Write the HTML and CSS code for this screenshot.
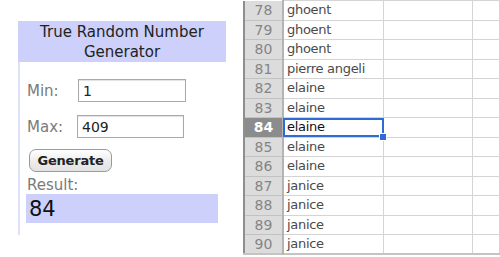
FILE: index.html
```html
<!DOCTYPE html>
<html lang="en">
<head>
    <meta charset="UTF-8">
    <meta name="viewport" content="width=device-width, initial-scale=1.0">
    <title>True Random Number Generator</title>
    <link rel="stylesheet" href="styles.css">
</head>
<body>
    <div class="rng-panel">
        <div class="rng-header">True Random Number Generator</div>
        <div class="rng-body">
            <div class="field-row">
                <label for="min">Min:</label>
                <input type="text" id="min" value="1">
            </div>
            <div class="field-row">
                <label for="max">Max:</label>
                <input type="text" id="max" value="409">
            </div>
            <button type="button">Generate</button>
            <div class="result-label">Result:</div>
            <div class="result-value">84</div>
        </div>
    </div>

    <div class="sheet">
        <table>
            <tr><th>78</th><td>ghoent</td><td></td><td></td></tr>
            <tr><th>79</th><td>ghoent</td><td></td><td></td></tr>
            <tr><th>80</th><td>ghoent</td><td></td><td></td></tr>
            <tr><th>81</th><td>pierre angeli</td><td></td><td></td></tr>
            <tr><th>82</th><td>elaine</td><td></td><td></td></tr>
            <tr><th>83</th><td>elaine</td><td></td><td></td></tr>
            <tr class="active"><th>84</th><td class="selected">elaine<span class="handle"></span></td><td></td><td></td></tr>
            <tr><th>85</th><td>elaine</td><td></td><td></td></tr>
            <tr><th>86</th><td>elaine</td><td></td><td></td></tr>
            <tr><th>87</th><td>janice</td><td></td><td></td></tr>
            <tr><th>88</th><td>janice</td><td></td><td></td></tr>
            <tr><th>89</th><td>janice</td><td></td><td></td></tr>
            <tr><th>90</th><td>janice</td><td></td><td></td></tr>
        </table>
    </div>
</body>
</html>
```

FILE: styles.css
```css
:root {
    --lavender: #ccd0fa;
    --label-gray: #7a7a7a;
    --grid-line: #d4d4d4;
    --select-blue: #2f6ad6;
}

body {
    margin: 0;
    padding: 0;
    background: white;
    font-family: "DejaVu Sans", Verdana, sans-serif;
    display: flex;
    align-items: flex-start;
    width: 500px;
    height: 257px;
    overflow: hidden;
}

.rng-panel {
    width: 208px;
    margin: 21px 0 0 18px;
}

.rng-header {
    background: var(--lavender);
    color: #222;
    font-size: 15px;
    line-height: 20px;
    text-align: center;
    padding: 1px 8px 0;
    height: 40px;
}

.rng-body {
    border-left: 2px solid #dfe1fb;
    padding: 17px 0 12px 7px;
    height: 144px;
}

.field-row {
    display: flex;
    align-items: center;
    height: 23px;
    margin-bottom: 13px;
}

.field-row label {
    width: 51px;
    color: var(--label-gray);
    font-size: 15px;
}

.field-row input {
    width: 108px;
    height: 23px;
    box-sizing: border-box;
    border: 1px solid #a9a9a9;
    box-shadow: inset 0 1px 1px rgba(0,0,0,0.12);
    font-family: "DejaVu Sans", Verdana, sans-serif;
    font-size: 14px;
    color: #222;
    padding: 1px 4px 0;
    outline: none;
}

.field-row:nth-child(2) input {
    margin-left: -1px;
    width: 107px;
}

button {
    display: block;
    margin: -2px 0 0 2px;
    width: 83px;
    height: 23px;
    border: 1px solid #9a9a9a;
    border-radius: 7px;
    background: linear-gradient(#ffffff, #ececec 55%, #e2e2e2);
    font-family: "DejaVu Sans", Verdana, sans-serif;
    font-size: 13px;
    font-weight: bold;
    color: #222;
    padding: 0;
    letter-spacing: -0.2px;
}

.result-label {
    color: var(--label-gray);
    font-size: 15px;
    line-height: 17px;
    margin-top: 5px;
}

.result-value {
    background: var(--lavender);
    width: 189px;
    height: 29px;
    margin-left: -1px;
    padding-left: 3px;
    font-size: 21px;
    line-height: 30px;
    color: #111;
}

.sheet {
    margin-left: 17px;
    flex: 1;
}

table {
    border-collapse: collapse;
    table-layout: fixed;
    width: 257px;
    border-left: 2px solid #8e8e8e;
    border-bottom: 2px solid #c4c4c4;
}

tr {
    height: 19.5px;
}

th {
    width: 37px;
    background: #dcdcdc;
    color: #858585;
    font-size: 14px;
    font-weight: normal;
    text-align: center;
    padding: 0;
    border-bottom: 1px solid #c2c2c2;
    border-right: 2px solid #b4b4b4;
    line-height: 18px;
}

td {
    padding: 0 0 0 3px;
    border: 1px solid var(--grid-line);
    border-left: none;
    font-size: 13px;
    color: #4a4a4a;
    letter-spacing: -0.3px;
    line-height: 18px;
    white-space: nowrap;
    overflow: visible;
}

td:nth-child(2) {
    width: 96px;
}

td:nth-child(3) {
    width: 85px;
}

tr.active th {
    background: #8c8c8c;
    color: #fff;
    font-weight: bold;
}

td.selected {
    position: relative;
    color: #111;
    outline: 2px solid var(--select-blue);
    outline-offset: -2px;
}

.handle {
    position: absolute;
    right: -4px;
    bottom: -4px;
    width: 6px;
    height: 6px;
    background: var(--select-blue);
    border: 1px solid white;
}
```
